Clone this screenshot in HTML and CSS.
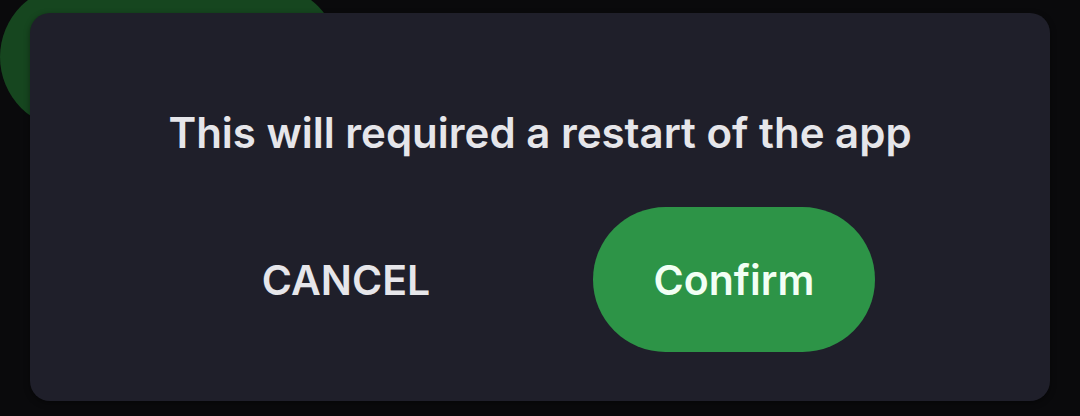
FILE: index.html
```html
<!DOCTYPE html>
<html lang="en">
<head>
<meta charset="utf-8">
<title>Restart dialog</title>
<link rel="stylesheet" href="styles.css">
</head>
<body>
<div class="screen">
  <div class="backdrop-pill"></div>
  <div class="dialog">
    <p class="message">This will required a restart of the app</p>
    <div class="actions">
      <button class="btn btn-text">CANCEL</button>
      <button class="btn btn-primary">Confirm</button>
    </div>
  </div>
</div>
</body>
</html>
```

FILE: styles.css
```css
* { box-sizing: border-box; }
html, body {
  margin: 0;
  padding: 0;
  background: #0a0a0c;
  width: 1080px;
  height: 416px;
  overflow: hidden;
}
.screen {
  position: relative;
  width: 1080px;
  height: 416px;
  padding: 13px 30px 15px 30px;
  font-family: Inter, Roboto, "Noto Sans", sans-serif;
}
.backdrop-pill {
  position: absolute;
  left: 0;
  top: -15px;
  width: 339px;
  height: 144px;
  border-radius: 72px;
  background: #16461f;
}
.dialog {
  position: relative;
  height: 388px;
  background: #1f1f2a;
  border-radius: 20px;
  padding: 95px 0 49px;
  display: flex;
  flex-direction: column;
  align-items: center;
  gap: 49px;
  box-shadow: 0 2px 6px rgba(0,0,0,0.4);
}
.message {
  margin: 0;
  height: 50px;
  line-height: 50px;
  font-size: 42px;
  font-weight: 600;
  color: #e6e6ea;
  text-align: center;
}
.actions {
  display: flex;
  justify-content: center;
  gap: 106px;
}
.btn {
  width: 282px;
  height: 145px;
  border: 0;
  border-radius: 73px;
  font-family: Inter, Roboto, "Noto Sans", sans-serif;
  font-size: 41px;
  font-weight: 600;
  padding: 0;
  display: flex;
  align-items: center;
  justify-content: center;
}
.btn-text {
  background: transparent;
  color: #e6e6ea;
}
.btn-primary {
  background: #2d9447;
  color: #f2fff4;
}
```
